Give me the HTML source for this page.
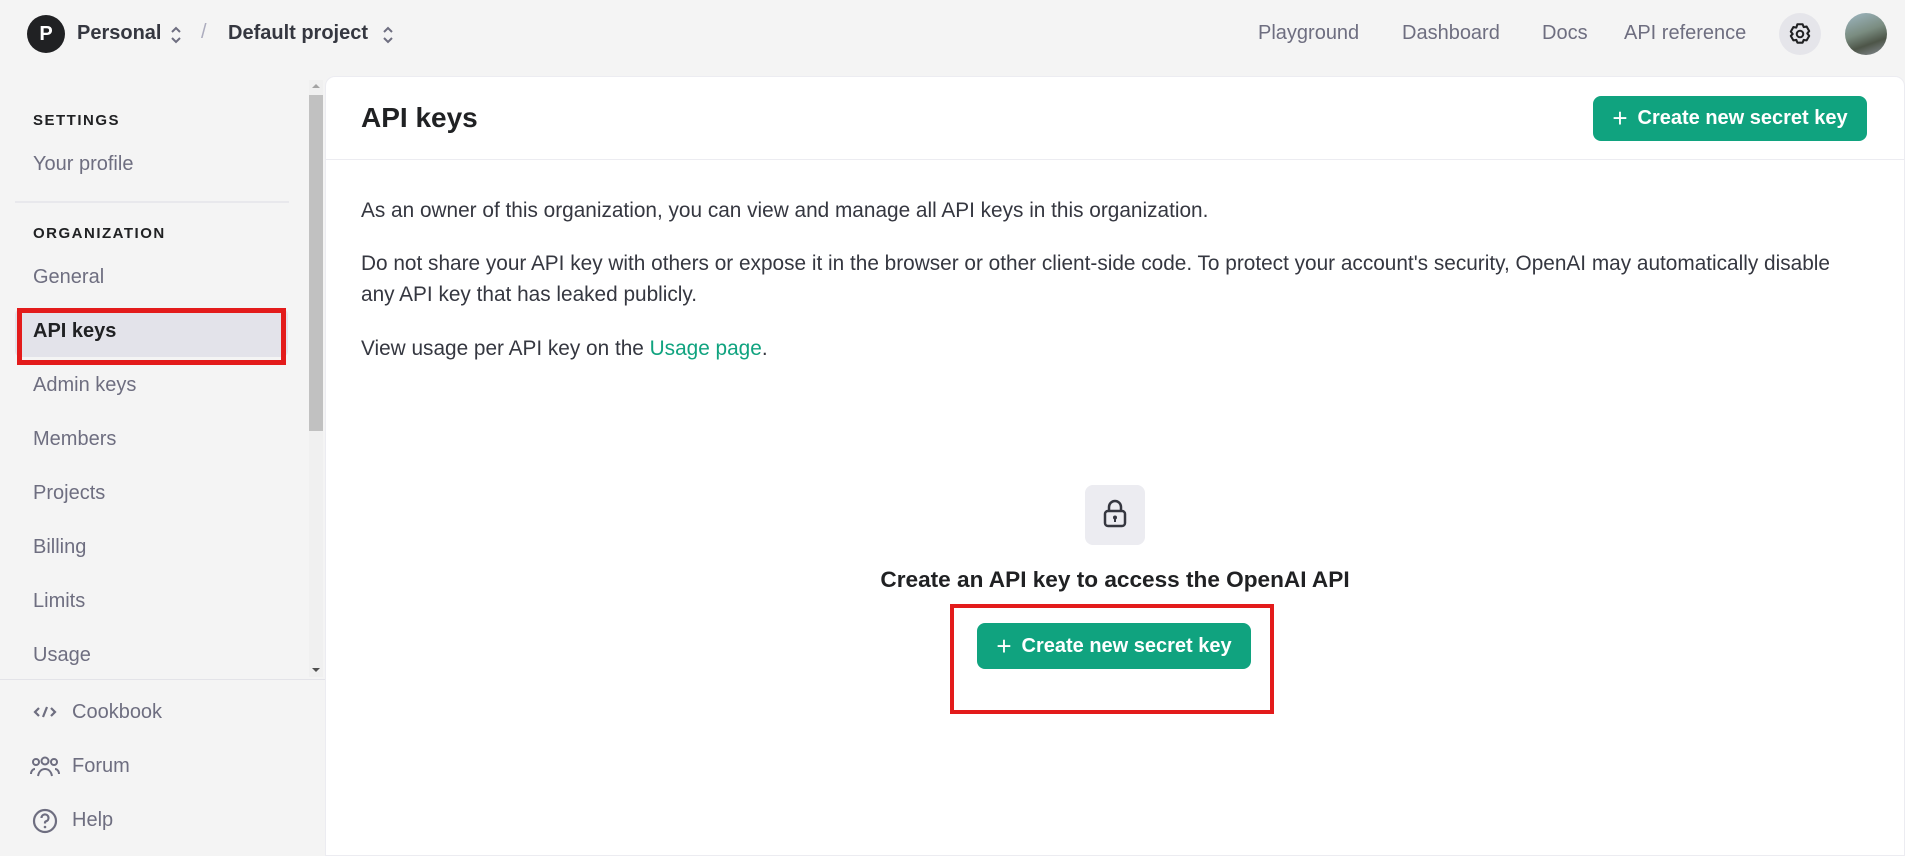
<!DOCTYPE html>
<html><head><meta charset="utf-8"><style>
*{box-sizing:border-box;margin:0;padding:0}
body{width:1905px;height:846px;background:#f4f4f4;font-family:"Liberation Sans",sans-serif;position:relative;overflow:hidden;color:#202123}
.a{position:absolute;white-space:nowrap}
.nav{font-size:20px;color:#6e6e80;top:22px}
.side{font-size:20px;color:#6e6e80;left:33px}
.cap{font-size:15px;letter-spacing:1.5px;color:#202123;left:33px;font-weight:bold}
.btn{position:absolute;background:#10a37f;color:#fff;border-radius:8px;font-size:20px;font-weight:bold;display:flex;align-items:center;justify-content:center;gap:10px}
.p{font-size:20.8px;color:#353740;left:361px}
</style></head><body>
<div class="a" style="left:27px;top:15px;width:38px;height:38px;border-radius:50%;background:#202123;color:#fff;font-size:20px;font-weight:bold;text-align:center;line-height:38px">P</div>
<div class="a" style="left:77px;top:22px;font-size:20px;font-weight:bold;color:#353740">Personal</div>
<svg class="a" style="left:169px;top:25px" width="14" height="20" viewBox="0 0 14 20"><path d="M3 7l4-4 4 4M3 13l4 4 4-4" fill="none" stroke="#6e6e80" stroke-width="2"/></svg>
<div class="a" style="left:201px;top:21px;font-size:20px;color:#acacbe">/</div>
<div class="a" style="left:228px;top:22px;font-size:20px;font-weight:bold;color:#353740">Default project</div>
<svg class="a" style="left:381px;top:25px" width="14" height="20" viewBox="0 0 14 20"><path d="M3 7l4-4 4 4M3 13l4 4 4-4" fill="none" stroke="#6e6e80" stroke-width="2"/></svg>
<div class="a nav" style="left:1258px">Playground</div>
<div class="a nav" style="left:1402px">Dashboard</div>
<div class="a nav" style="left:1542px">Docs</div>
<div class="a nav" style="left:1624px">API reference</div>
<div class="a" style="left:1779px;top:13px;width:42px;height:42px;border-radius:50%;background:#e5e5ea"></div>
<svg class="a" style="left:1787px;top:21px" width="26" height="26" viewBox="0 0 24 24"><path d="M9.6 3h4.8l1 2.6 2.7-.5 2.4 4.2-1.8 2.2 1.8 2.2-2.4 4.2-2.7-.5-1 2.6H9.6l-1-2.6-2.7.5-2.4-4.2L5.3 12 3.5 9.8l2.4-4.2 2.7.5z" fill="none" stroke="#202123" stroke-width="1.9" stroke-linejoin="round"/><circle cx="12" cy="12" r="3" fill="none" stroke="#202123" stroke-width="1.9"/></svg>
<div class="a" style="left:1845px;top:13px;width:42px;height:42px;border-radius:50%;background:linear-gradient(160deg,#9fb8c4 0%,#7a8c80 45%,#4d5548 70%,#8a9098 100%)"></div>

<div class="a cap" style="top:112px">SETTINGS</div>
<div class="a side" style="top:153px">Your profile</div>
<div class="a" style="left:15px;top:201px;width:274px;height:2px;background:#e8e8ec"></div>
<div class="a cap" style="top:225px">ORGANIZATION</div>
<div class="a side" style="top:266px">General</div>
<div class="a" style="left:15px;top:309px;width:273px;height:48px;border-radius:6px;background:#e3e3ea"></div>
<div class="a side" style="top:320px;color:#202123;font-weight:bold">API keys</div>
<div class="a" style="left:17px;top:308px;width:269px;height:57px;border:5px solid #e31b1b"></div>
<div class="a side" style="top:374px">Admin keys</div>
<div class="a side" style="top:428px">Members</div>
<div class="a side" style="top:482px">Projects</div>
<div class="a side" style="top:536px">Billing</div>
<div class="a side" style="top:590px">Limits</div>
<div class="a side" style="top:644px">Usage</div>
<div class="a" style="left:309px;top:80px;width:14px;height:597px;background:#f0f0f0"></div>
<div class="a" style="left:309px;top:95px;width:14px;height:336px;background:#c1c1c1"></div>
<div class="a" style="left:312px;top:84px;border:4px solid transparent;border-bottom-color:#a3a3a3;border-top:none"></div>
<div class="a" style="left:312px;top:668px;border:4px solid transparent;border-top-color:#505050;border-bottom:none"></div>
<div class="a" style="left:0;top:679px;width:325px;height:1px;background:#e3e3e8"></div>
<svg class="a" style="left:32px;top:703px" width="26" height="18" viewBox="0 0 26 18"><path d="M7 5l-4 4 4 4M19 5l4 4-4 4M15 4l-4 10" fill="none" stroke="#6e6e80" stroke-width="2.2"/></svg>
<div class="a side" style="left:72px;top:701px">Cookbook</div>
<svg class="a" style="left:30px;top:756px" width="30" height="22" viewBox="0 0 30 22"><circle cx="6" cy="6" r="3" fill="none" stroke="#6e6e80" stroke-width="2"/><circle cx="15" cy="5" r="3.5" fill="none" stroke="#6e6e80" stroke-width="2"/><circle cx="24" cy="6" r="3" fill="none" stroke="#6e6e80" stroke-width="2"/><path d="M8 20c1-5 4-7 7-7s6 2 7 7M1 18c0-3 2-5 4-5M29 18c0-3-2-5-4-5" fill="none" stroke="#6e6e80" stroke-width="2"/></svg>
<div class="a side" style="left:72px;top:755px">Forum</div>
<svg class="a" style="left:32px;top:808px" width="26" height="26" viewBox="0 0 26 26"><circle cx="13" cy="13" r="11" fill="none" stroke="#6e6e80" stroke-width="2.2"/><path d="M9.5 10a3.5 3.5 0 1 1 4.5 3.3c-.7.3-1 .8-1 1.5v.7" fill="none" stroke="#6e6e80" stroke-width="2.2"/><circle cx="13" cy="19" r="1.3" fill="#6e6e80"/></svg>
<div class="a side" style="left:72px;top:809px">Help</div>

<div class="a" style="left:325px;top:76px;width:1580px;height:780px;background:#fff;border:1px solid #ececf1;border-radius:10px 10px 0 0"></div>
<div class="a" style="left:325px;top:159px;width:1580px;height:1px;background:#ececf1"></div>
<div class="a" style="left:361px;top:102px;font-size:28px;font-weight:bold;color:#202123">API keys</div>
<div class="btn" style="left:1593px;top:96px;width:274px;height:45px"><span style="font-size:26px;font-weight:normal">+</span>Create new secret key</div>
<div class="a p" style="top:199px">As an owner of this organization, you can view and manage all API keys in this organization.</div>
<div class="a p" style="top:252px">Do not share your API key with others or expose it in the browser or other client-side code. To protect your account's security, OpenAI may automatically disable</div>
<div class="a p" style="top:283px">any API key that has leaked publicly.</div>
<div class="a p" style="top:337px">View usage per API key on the <span style="color:#10a37f">Usage page</span>.</div>
<div class="a" style="left:1085px;top:485px;width:60px;height:60px;border-radius:8px;background:#ececf1"></div>
<svg class="a" style="left:1100px;top:498px" width="30" height="32" viewBox="0 0 30 32"><rect x="5" y="13" width="20" height="15" rx="3" fill="none" stroke="#353740" stroke-width="2.5"/><path d="M9 13V9a6 6 0 0 1 12 0v4" fill="none" stroke="#353740" stroke-width="2.5"/><circle cx="15" cy="19.5" r="2" fill="#353740"/><rect x="14" y="20" width="2" height="4" fill="#353740"/></svg>
<div class="a" style="left:765px;width:700px;top:567px;text-align:center;font-size:22.6px;font-weight:bold;color:#202123">Create an API key to access the OpenAI API</div>
<div class="btn" style="left:977px;top:623px;width:274px;height:46px"><span style="font-size:26px;font-weight:normal">+</span>Create new secret key</div>
<div class="a" style="left:950px;top:604px;width:324px;height:110px;border:4px solid #e31b1b"></div>
</body></html>
